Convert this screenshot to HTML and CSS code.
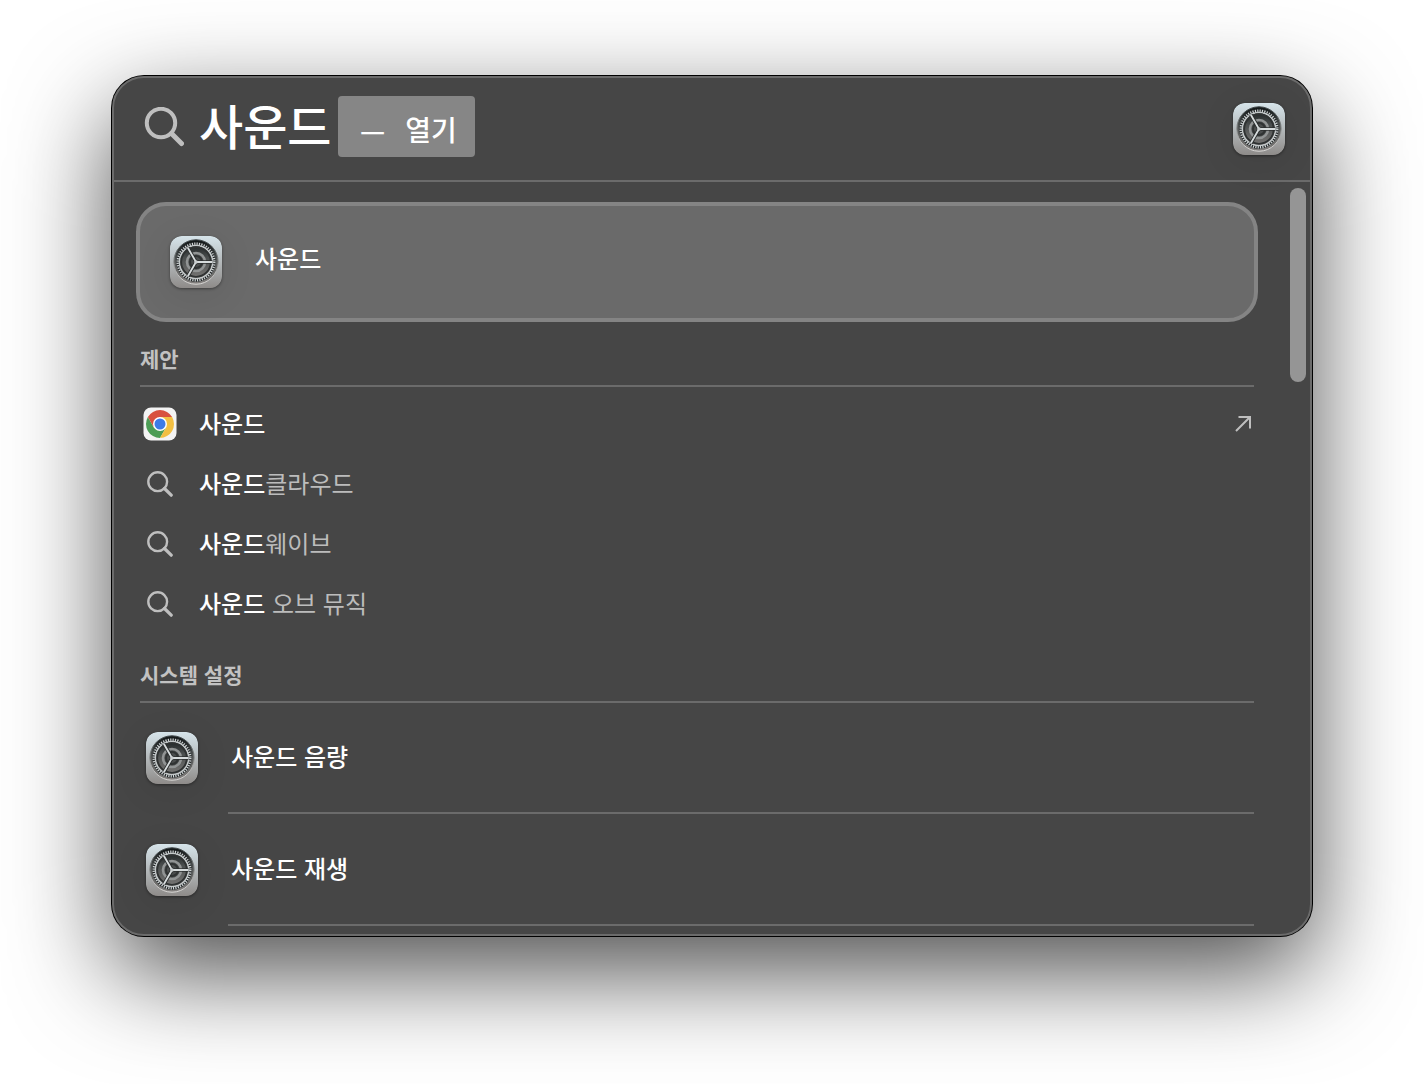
FILE: index.html
```html
<!DOCTYPE html>
<html lang="ko">
<head>
    <meta charset="UTF-8">
    <meta name="viewport" content="width=device-width, initial-scale=1.0">
    <title>사운드</title>
    <link rel="stylesheet" href="styles.css">
</head>
<body>
    <!-- shared icons -->
    <svg class="sprite" width="0" height="0" aria-hidden="true">
        <defs>
            <linearGradient id="plate" x1="0" y1="0" x2="0" y2="1">
                <stop offset="0" stop-color="#d6e4ea"/>
                <stop offset="0.5" stop-color="#b4b9bb"/>
                <stop offset="1" stop-color="#8e8b89"/>
            </linearGradient>
            <linearGradient id="well" x1="0" y1="0" x2="0" y2="1">
                <stop offset="0" stop-color="#0f1415"/>
                <stop offset="0.4" stop-color="#4a4e4e"/>
                <stop offset="1" stop-color="#858280"/>
            </linearGradient>
            <linearGradient id="rim" x1="0" y1="0" x2="0" y2="1">
                <stop offset="0" stop-color="#3c4446"/>
                <stop offset="1" stop-color="#dddbd9"/>
            </linearGradient>
        </defs>
        <symbol id="settings" viewBox="0 0 52 52">
            <rect width="52" height="52" rx="11.5" fill="url(#plate)"/>
            <circle cx="26" cy="26" r="22.2" fill="url(#well)" stroke="url(#rim)" stroke-width="1"/>
            <circle cx="26" cy="26" r="18.4" fill="none" stroke="#202425" stroke-width="2.6"/>
            <circle cx="26" cy="26" r="18.3" fill="none" stroke="#d0d5d6" stroke-width="2.4" stroke-dasharray="1.2 1.196"/>
            <circle cx="26" cy="26" r="16.6" fill="none" stroke="#c4c9ca" stroke-width="1.5"/>
            <circle cx="26" cy="26" r="14.8" fill="none" stroke="#2f3232" stroke-width="1.8"/>
            <circle cx="26" cy="26" r="9" fill="#4a4d4d" stroke="#919494" stroke-width="2.6"/>
            <circle cx="26" cy="26" r="6" fill="none" stroke="#303333" stroke-width="2"/>
            <path d="M26 26H42.5M26 26L17.8 11.7M26 26L17.8 40.3" fill="none" stroke="#2b2e2e" stroke-width="3.6"/>
            <path d="M26 26H42.5M26 26L17.8 11.7M26 26L17.8 40.3" fill="none" stroke="#d6dbdc" stroke-width="1.8"/>
            <circle cx="26" cy="26" r="1.8" fill="#c9cdce"/>
        </symbol>
        <symbol id="search" viewBox="0 0 40 40">
            <circle cx="17" cy="16" r="14.2" fill="none" stroke="currentColor" stroke-width="4"/>
            <path d="M27.5 26.5L37.5 36.5" fill="none" stroke="currentColor" stroke-width="5" stroke-linecap="round"/>
        </symbol>
        <symbol id="search-small" viewBox="0 0 26 26">
            <circle cx="10.7" cy="10.7" r="9.4" fill="none" stroke="currentColor" stroke-width="2.4"/>
            <path d="M17.5 17.5L24.2 24.2" fill="none" stroke="currentColor" stroke-width="3.2" stroke-linecap="round"/>
        </symbol>
        <symbol id="chrome" viewBox="0 0 34 34">
            <rect x="0.5" y="0.5" width="33" height="33" rx="7.5" fill="#f3f3f3"/>
            <path d="M4.88 10A14 14 0 0 0 17 31L23.06 20.5L17 17L10.94 20.5Z" fill="#4c9d55"/>
            <path d="M17 31A14 14 0 0 0 29.12 10H17V17L23.06 20.5Z" fill="#f2bf42"/>
            <path d="M4.88 10A14 14 0 0 1 29.12 10H17L10.94 20.5Z" fill="#d8513f"/>
            <circle cx="17" cy="17" r="7" fill="#fff"/>
            <circle cx="17" cy="17" r="5.5" fill="#3d7be8"/>
        </symbol>
    </svg>

    <main class="panel">
        <header class="search-bar">
            <svg class="search-icon" aria-hidden="true"><use href="#search"/></svg>
            <input class="query" type="text" value="사운드" aria-label="검색">
            <span class="completion"><span>—</span><span>열기</span></span>
            <svg class="app-icon" aria-hidden="true"><use href="#settings"/></svg>
        </header>

        <div class="results">
            <button class="top-hit">
                <svg class="app-icon" aria-hidden="true"><use href="#settings"/></svg>
                <span>사운드</span>
            </button>

            <section>
                <h2>제안</h2>
                <ul class="suggestions">
                    <li><button class="row">
                        <span class="row-icon"><svg class="chrome" aria-hidden="true"><use href="#chrome"/></svg></span>
                        <span class="label"><b>사운드</b></span>
                        <svg class="arrow" viewBox="0 0 16 16" aria-hidden="true"><path d="M1 15L14.5 1.5M3.5 1H15V12.5" fill="none" stroke="currentColor" stroke-width="2"/></svg>
                    </button></li>
                    <li><button class="row">
                        <span class="row-icon"><svg class="glass" aria-hidden="true"><use href="#search-small"/></svg></span>
                        <span class="label"><b>사운드</b>클라우드</span>
                    </button></li>
                    <li><button class="row">
                        <span class="row-icon"><svg class="glass" aria-hidden="true"><use href="#search-small"/></svg></span>
                        <span class="label"><b>사운드</b>웨이브</span>
                    </button></li>
                    <li><button class="row">
                        <span class="row-icon"><svg class="glass" aria-hidden="true"><use href="#search-small"/></svg></span>
                        <span class="label"><b>사운드</b> 오브 뮤직</span>
                    </button></li>
                </ul>
            </section>

            <section>
                <h2>시스템 설정</h2>
                <ul class="settings">
                    <li><button class="setting">
                        <svg class="app-icon" aria-hidden="true"><use href="#settings"/></svg>
                        <span class="setting-name">사운드 음량</span>
                    </button></li>
                    <li><button class="setting">
                        <svg class="app-icon" aria-hidden="true"><use href="#settings"/></svg>
                        <span class="setting-name">사운드 재생</span>
                    </button></li>
                </ul>
            </section>

            <div class="scroll-thumb"></div>
        </div>
    </main>
</body>
</html>
```
FILE: styles.css
```css
* {
    box-sizing: border-box;
}
body {
    margin: 0;
    padding: 76px 112px 148px;
    background: #fff;
    color: #fff;
    font-family: "Noto Sans CJK KR", sans-serif;
    font-size: 24px;
    font-weight: 500;
    line-height: 36px;
}
button, input {
    font: inherit;
    color: inherit;
    background: none;
    border: none;
    padding: 0;
    text-align: left;
}
ul {
    list-style: none;
    margin: 0;
    padding: 0;
}
.sprite {
    position: absolute;
}
.panel {
    background: #464646;
    border: 2px solid #6b6b6b;
    border-radius: 32px;
    box-shadow: 0 0 0 1px #000, 0 36px 100px rgba(0, 0, 0, 0.7);
    overflow: hidden;
}

/* search bar */
.search-bar {
    display: flex;
    align-items: center;
    height: 104px;
    padding: 0 25px 0 30px;
    border-bottom: 2px solid #6b6b6b;
}
.search-icon {
    width: 40px;
    height: 40px;
    margin-right: 15px;
    margin-bottom: 4px;
    color: #bfbfbf;
}
.query {
    width: 139px;
    height: 72px;
    margin-bottom: 10px;
    font-size: 48px;
    line-height: 72px;
    outline: none;
}
.completion {
    display: flex;
    gap: 20px;
    height: 61px;
    margin-bottom: 6px;
    padding: 3px 18px 0 22px;
    border-radius: 4px;
    background: #868686;
    font-size: 28px;
    line-height: 61px;
}
.app-icon {
    flex: none;
    width: 52px;
    height: 52px;
    border-radius: 12px;
    box-shadow: 0 1px 3px rgba(0, 0, 0, 0.4), 0 6px 36px rgba(0, 0, 0, 0.08);
}
.search-bar .app-icon {
    margin-left: auto;
}

/* results */
.results {
    position: relative;
    padding: 20px 56px 8px 26px;
}
.top-hit {
    display: flex;
    align-items: center;
    gap: 33px;
    width: calc(100% + 8px);
    height: 120px;
    margin: 0 -4px;
    padding: 0 30px;
    border: 4px solid #848484;
    border-radius: 30px;
    background: #6a6a6a;
}
.top-hit span {
    margin-bottom: 8px;
}
h2 {
    margin: 0;
    padding: 22px 0 13px;
    border-bottom: 2px solid #6b6b6b;
    color: #c2c2c2;
    font-size: 21px;
    font-weight: 700;
    line-height: 28px;
}
.suggestions {
    padding: 7px 0 4px;
}
.row {
    display: flex;
    align-items: center;
    width: 100%;
    height: 60px;
}
.row-icon {
    display: flex;
    justify-content: center;
    width: 40px;
    margin-right: 19px;
    color: #bfbfbf;
}
.glass {
    width: 26px;
    height: 26px;
}
.chrome {
    width: 34px;
    height: 34px;
}
.label {
    flex: 1;
    margin-bottom: 3px;
    color: #bcbcbc;
    font-weight: 400;
}
.label b {
    color: #fff;
    font-weight: 500;
}
.arrow {
    width: 16px;
    height: 16px;
    margin-right: 3px;
    color: #bfbfbf;
}
.settings {
    margin-top: -1px;
}
.setting {
    display: flex;
    align-items: center;
    gap: 30px;
    width: 100%;
    height: 112px;
    padding-left: 6px;
}
.setting-name {
    flex: 1;
    height: 112px;
    padding-left: 3px;
    border-bottom: 2px solid #6b6b6b;
    line-height: 108px;
}

/* scrollbar lies over the list */
.scroll-thumb {
    position: absolute;
    top: 6px;
    right: 4px;
    width: 16px;
    height: 194px;
    border-radius: 8px;
    background: #959595;
}
```
